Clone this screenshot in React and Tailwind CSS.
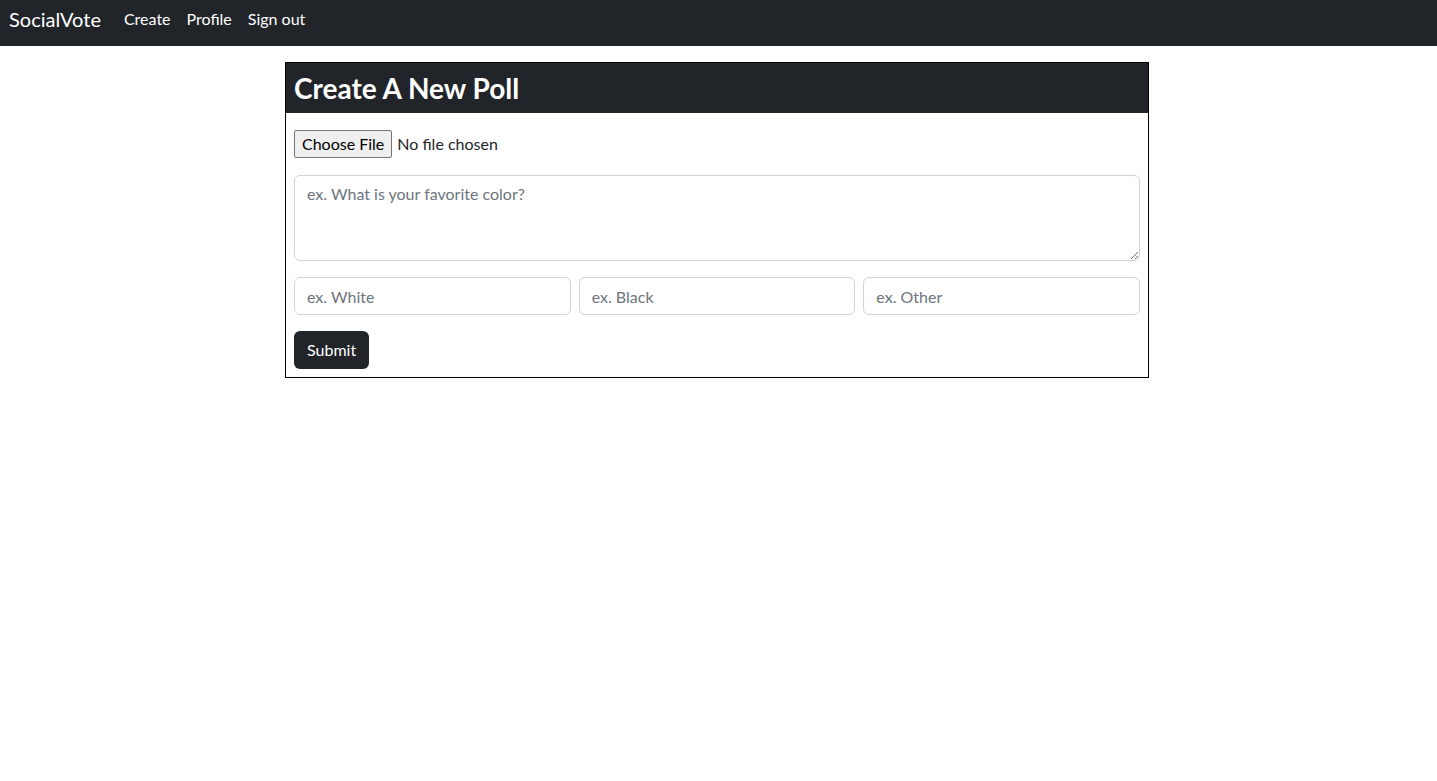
export default function App() {
  return (
    <div className="min-h-screen bg-white text-[#212529] font-['Segoe_UI','Lato','Noto_Sans',sans-serif]">
      <nav className="h-[46px] bg-[#212529] flex items-center px-[9px] pb-[8px]">
        <span className="text-white text-[20px] mr-[23px]">SocialVote</span>
        <div className="flex items-center gap-[16px] text-white text-[16px]">
          <a href="#">Create</a>
          <a href="#">Profile</a>
          <a href="#">Sign out</a>
        </div>
      </nav>

      <main className="pt-[16px] pl-[285px]">
        <div className="w-[864px] border border-black">
          <div className="h-[50px] bg-[#212529] flex items-center px-[8px]">
            <h2 className="text-white text-[28px] font-bold">Create A New Poll</h2>
          </div>
          <form className="px-[8px] pt-[17px] pb-[8px] flex flex-col gap-[16px]">
            <input
              type="file"
              className="text-[16px] h-[28px] mb-[1px] file:h-[28px] file:bg-[#efefef] file:border file:border-[#767676] file:rounded-[2px] file:px-[7px] file:mr-[5px] file:text-black"
            />
            <textarea
              placeholder="ex. What is your favorite color?"
              className="w-full h-[86px] border border-[#ced4da] rounded-[6px] px-[12px] py-[6px] text-[16px] placeholder:text-[#6c757d] resize-y"
            />
            <div className="grid grid-cols-3 gap-[8px]">
              <input placeholder="ex. White" className="h-[38px] border border-[#ced4da] rounded-[6px] px-[12px] text-[16px] placeholder:text-[#6c757d]" />
              <input placeholder="ex. Black" className="h-[38px] border border-[#ced4da] rounded-[6px] px-[12px] text-[16px] placeholder:text-[#6c757d]" />
              <input placeholder="ex. Other" className="h-[38px] border border-[#ced4da] rounded-[6px] px-[12px] text-[16px] placeholder:text-[#6c757d]" />
            </div>
            <div>
              <button type="button" className="h-[38px] px-[13px] bg-[#212529] text-white rounded-[6px] text-[16px]">
                Submit
              </button>
            </div>
          </form>
        </div>
      </main>
    </div>
  );
}
